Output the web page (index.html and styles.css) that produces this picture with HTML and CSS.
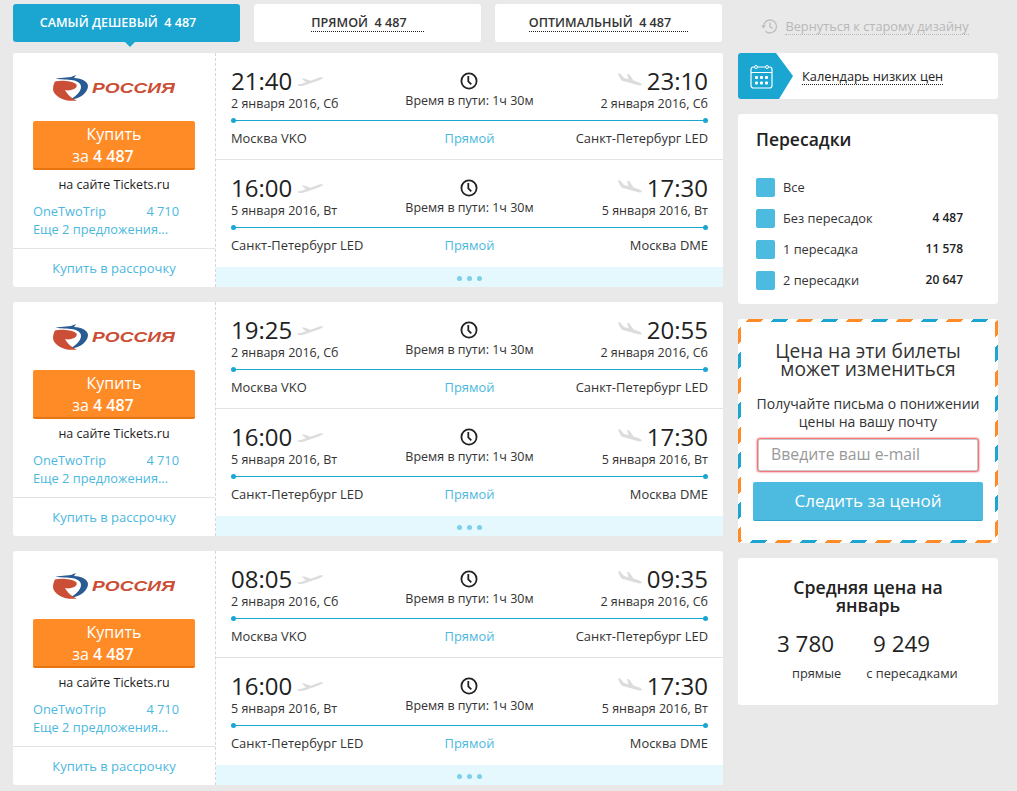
FILE: index.html
```html
<!DOCTYPE html>
<html lang="ru">
<head>
  <meta charset="UTF-8">
  <title>Авиабилеты</title>
  <link rel="stylesheet" href="styles.css">
</head>
<body>
  <svg class="sprite" width="0" height="0">
    <symbol id="logo-mark" viewBox="0 0 36 26">
      <path fill="#2a5a94" d="M2.500 3.500 18 2 23 0 21 3C29 3 35 7 35 11 35 17 28 24 16 25 22 22 28 17 28 12 28 8 24 5.500 18 5 12 4.500 5 4.500 2.500 3.500z"/>
      <path fill="#cb4f36" d="M2 6.500C8 5 19 6 23 9 25 11 23 14 18 15 16 15.500 14 15.500 12 15 14 19 19 24 24 25.500 20 26 16 26 12 25 5 23 0 18 0 14 0 11 1 8 2 6.500z"/>
    </symbol>
    <symbol id="plane-out" viewBox="0 0 26 12">
      <path fill="#dcdcdc" d="M0 9.500 4 9l5-1.800L4.500 3.500H7.200L13.500 5.700 20 3.400C23 2.400 26 2 26 2.800 26 3.800 23 5 20 6L7 10.600C4.500 11.400 1 11.200 0 9.500z"/>
    </symbol>
    <symbol id="plane-in" viewBox="0 0 24 16">
      <path fill="#dcdcdc" d="M0 .5 2 .2 6 5 10.500 6.200 9 .8 11.500 1.500 15.500 7.600 20 9C22 9.600 24 11 23.800 11.800 23.500 12.800 21 12.500 18.500 11.800L4 7.800C2 5.500.5 2.500 0 .5z"/>
    </symbol>
    <symbol id="clock" viewBox="0 0 18 18">
      <circle cx="9" cy="9" r="7.600" fill="none" stroke="#222" stroke-width="1.800"/>
      <path fill="none" stroke="#222" stroke-width="1.800" d="M8.300 4v5.300l3 3"/>
    </symbol>
  </svg>

  <div class="page">
    <main class="results">
      <nav class="tabs">
        <a class="tab tab-active" href="#"><span>САМЫЙ ДЕШЕВЫЙ&nbsp; 4 487</span></a>
        <a class="tab" href="#"><span class="dotted">ПРЯМОЙ&nbsp; 4 487</span></a>
        <a class="tab" href="#"><span class="dotted">ОПТИМАЛЬНЫЙ&nbsp; 4 487</span></a>
      </nav>

      <article class="ticket">
        <div class="buy">
          <div class="buy-main">
            <svg class="logo" width="122" height="26"><use href="#logo-mark" width="36" height="26"/><text class="logo-name" x="39" y="18" textLength="83" lengthAdjust="spacingAndGlyphs">РОССИЯ</text></svg>
            <a class="buy-btn" href="#">Купить<span class="buy-price">за <b>4 487</b></span></a>
            <p class="buy-site">на сайте Tickets.ru</p>
            <p class="offer"><span>OneTwoTrip</span><span>4 710</span></p>
            <p class="more">Еще 2 предложения...</p>
          </div>
          <a class="credit" href="#">Купить в рассрочку</a>
        </div>
        <div class="legs">
          <section class="leg">
            <div class="leg-top">
              <div class="point"><div class="time">21:40<svg class="plane" width="26" height="12"><use href="#plane-out"/></svg></div><div class="date">2 января 2016, Сб</div></div>
              <div class="duration"><svg width="18" height="18"><use href="#clock"/></svg><div>Время в пути: 1ч 30м</div></div>
              <div class="point point-end"><div class="time"><svg class="plane" width="24" height="16"><use href="#plane-in"/></svg>23:10</div><div class="date">2 января 2016, Сб</div></div>
            </div>
            <div class="route"></div>
            <div class="cities"><span>Москва VKO</span><a href="#">Прямой</a><span>Санкт-Петербург LED</span></div>
          </section>
          <section class="leg">
            <div class="leg-top">
              <div class="point"><div class="time">16:00<svg class="plane" width="26" height="12"><use href="#plane-out"/></svg></div><div class="date">5 января 2016, Вт</div></div>
              <div class="duration"><svg width="18" height="18"><use href="#clock"/></svg><div>Время в пути: 1ч 30м</div></div>
              <div class="point point-end"><div class="time"><svg class="plane" width="24" height="16"><use href="#plane-in"/></svg>17:30</div><div class="date">5 января 2016, Вт</div></div>
            </div>
            <div class="route"></div>
            <div class="cities"><span>Санкт-Петербург LED</span><a href="#">Прямой</a><span>Москва DME</span></div>
          </section>
          <div class="legs-more"><i></i><i></i><i></i></div>
        </div>
      </article>

      <article class="ticket">
        <div class="buy">
          <div class="buy-main">
            <svg class="logo" width="122" height="26"><use href="#logo-mark" width="36" height="26"/><text class="logo-name" x="39" y="18" textLength="83" lengthAdjust="spacingAndGlyphs">РОССИЯ</text></svg>
            <a class="buy-btn" href="#">Купить<span class="buy-price">за <b>4 487</b></span></a>
            <p class="buy-site">на сайте Tickets.ru</p>
            <p class="offer"><span>OneTwoTrip</span><span>4 710</span></p>
            <p class="more">Еще 2 предложения...</p>
          </div>
          <a class="credit" href="#">Купить в рассрочку</a>
        </div>
        <div class="legs">
          <section class="leg">
            <div class="leg-top">
              <div class="point"><div class="time">19:25<svg class="plane" width="26" height="12"><use href="#plane-out"/></svg></div><div class="date">2 января 2016, Сб</div></div>
              <div class="duration"><svg width="18" height="18"><use href="#clock"/></svg><div>Время в пути: 1ч 30м</div></div>
              <div class="point point-end"><div class="time"><svg class="plane" width="24" height="16"><use href="#plane-in"/></svg>20:55</div><div class="date">2 января 2016, Сб</div></div>
            </div>
            <div class="route"></div>
            <div class="cities"><span>Москва VKO</span><a href="#">Прямой</a><span>Санкт-Петербург LED</span></div>
          </section>
          <section class="leg">
            <div class="leg-top">
              <div class="point"><div class="time">16:00<svg class="plane" width="26" height="12"><use href="#plane-out"/></svg></div><div class="date">5 января 2016, Вт</div></div>
              <div class="duration"><svg width="18" height="18"><use href="#clock"/></svg><div>Время в пути: 1ч 30м</div></div>
              <div class="point point-end"><div class="time"><svg class="plane" width="24" height="16"><use href="#plane-in"/></svg>17:30</div><div class="date">5 января 2016, Вт</div></div>
            </div>
            <div class="route"></div>
            <div class="cities"><span>Санкт-Петербург LED</span><a href="#">Прямой</a><span>Москва DME</span></div>
          </section>
          <div class="legs-more"><i></i><i></i><i></i></div>
        </div>
      </article>

      <article class="ticket">
        <div class="buy">
          <div class="buy-main">
            <svg class="logo" width="122" height="26"><use href="#logo-mark" width="36" height="26"/><text class="logo-name" x="39" y="18" textLength="83" lengthAdjust="spacingAndGlyphs">РОССИЯ</text></svg>
            <a class="buy-btn" href="#">Купить<span class="buy-price">за <b>4 487</b></span></a>
            <p class="buy-site">на сайте Tickets.ru</p>
            <p class="offer"><span>OneTwoTrip</span><span>4 710</span></p>
            <p class="more">Еще 2 предложения...</p>
          </div>
          <a class="credit" href="#">Купить в рассрочку</a>
        </div>
        <div class="legs">
          <section class="leg">
            <div class="leg-top">
              <div class="point"><div class="time">08:05<svg class="plane" width="26" height="12"><use href="#plane-out"/></svg></div><div class="date">2 января 2016, Сб</div></div>
              <div class="duration"><svg width="18" height="18"><use href="#clock"/></svg><div>Время в пути: 1ч 30м</div></div>
              <div class="point point-end"><div class="time"><svg class="plane" width="24" height="16"><use href="#plane-in"/></svg>09:35</div><div class="date">2 января 2016, Сб</div></div>
            </div>
            <div class="route"></div>
            <div class="cities"><span>Москва VKO</span><a href="#">Прямой</a><span>Санкт-Петербург LED</span></div>
          </section>
          <section class="leg">
            <div class="leg-top">
              <div class="point"><div class="time">16:00<svg class="plane" width="26" height="12"><use href="#plane-out"/></svg></div><div class="date">5 января 2016, Вт</div></div>
              <div class="duration"><svg width="18" height="18"><use href="#clock"/></svg><div>Время в пути: 1ч 30м</div></div>
              <div class="point point-end"><div class="time"><svg class="plane" width="24" height="16"><use href="#plane-in"/></svg>17:30</div><div class="date">5 января 2016, Вт</div></div>
            </div>
            <div class="route"></div>
            <div class="cities"><span>Санкт-Петербург LED</span><a href="#">Прямой</a><span>Москва DME</span></div>
          </section>
          <div class="legs-more"><i></i><i></i><i></i></div>
        </div>
      </article>
    </main>

    <aside class="side">
      <a class="old-design" href="#">
        <svg width="17" height="17" viewBox="0 0 17 17"><path fill="none" stroke="#bdbdbd" stroke-width="1.300" d="M2.500 8.500a6.500 6.500 0 1 1 2 4.700M9 4.500v4.300l2.800 1.700"/><path fill="#bdbdbd" d="M0 7.500h5l-2.500 3z"/></svg>
        <span>Вернуться к старому дизайну</span>
      </a>

      <a class="calendar" href="#">
        <span class="calendar-icon">
          <svg width="23" height="25" viewBox="0 0 23 25"><rect x="1" y="3" width="21" height="21" rx="2.500" fill="none" stroke="#fff" stroke-width="1.200"/><path stroke="#fff" stroke-width="1.200" d="M1 8.500h21"/><circle cx="6" cy="3" r="1.500" fill="#1ba6d2" stroke="#fff"/><circle cx="17" cy="3" r="1.500" fill="#1ba6d2" stroke="#fff"/><g fill="#fff"><rect x="5" y="12" width="3" height="3" rx="1"/><rect x="10" y="12" width="3" height="3" rx="1"/><rect x="15" y="12" width="3" height="3" rx="1"/><rect x="5" y="17.500" width="3" height="3" rx="1"/><rect x="10" y="17.500" width="3" height="3" rx="1"/><rect x="15" y="17.500" width="3" height="3" rx="1"/></g></svg>
        </span>
        <span class="calendar-text">Календарь низких цен</span>
      </a>

      <section class="panel stops">
        <h3>Пересадки</h3>
        <label class="stop"><i></i><span>Все</span></label>
        <label class="stop"><i></i><span>Без пересадок</span><b>4 487</b></label>
        <label class="stop"><i></i><span>1 пересадка</span><b>11 578</b></label>
        <label class="stop"><i></i><span>2 пересадки</span><b>20 647</b></label>
      </section>

      <section class="envelope">
        <div class="envelope-in">
          <h4>Цена на эти билеты может измениться</h4>
          <p>Получайте письма о понижении цены на вашу почту</p>
          <input class="email" type="text" placeholder="Введите ваш e-mail">
          <button class="watch">Следить за ценой</button>
        </div>
      </section>

      <section class="panel average">
        <h3>Средняя цена на январь</h3>
        <div class="average-nums"><span>3 780</span><span>9 249</span></div>
        <div class="average-labels"><span>прямые</span><span>с пересадками</span></div>
      </section>
    </aside>
  </div>
</body>
</html>
```

FILE: styles.css
```css
* {
  margin: 0;
  padding: 0;
  box-sizing: border-box;
}

body {
  font-family: 'Open Sans', sans-serif;
  font-size: 12.500px;
  background-color: #e9e9e9;
  color: #222;
  overflow: hidden;
}

a {
  text-decoration: none;
  color: inherit;
}

.sprite {
  display: block;
  height: 0;
}

.page {
  display: flex;
  gap: 15px;
  padding: 4px 0 0 13px;
}

.results {
  width: 710px;
}

/* tabs */
.tabs {
  display: flex;
  gap: 14px;
  margin-bottom: 11px;
}

.tab {
  position: relative;
  flex: 0 0 227px;
  height: 38px;
  display: flex;
  align-items: center;
  justify-content: center;
  background-color: #fff;
  border-radius: 3px;
  font-size: 12.600px;
  font-weight: 600;
  color: #333;
}

.tab span {
  padding-right: 17px;
  line-height: 16px;
}

.tab-active {
  background-color: #1ba6d2;
  color: #fff;
}

.tab-active::after {
  content: '';
  position: absolute;
  left: 117px;
  bottom: -5px;
  margin-left: -5px;
  border-top: 5px solid #1ba6d2;
  border-left: 5px solid transparent;
  border-right: 5px solid transparent;
}

.tab .dotted {
  border-bottom: 1px dotted #222;
}

/* ticket */
.ticket {
  display: flex;
  height: 234px;
  margin-bottom: 15px;
  background-color: #fff;
  border-radius: 3px;
  overflow: hidden;
}

.buy {
  width: 203px;
  display: flex;
  flex-direction: column;
  border-right: 1px dashed #d5d5d5;
}

.buy-main {
  flex: 1;
  padding: 22px 20px 0;
}

.logo {
  display: block;
  margin: 0 auto 20px;
}

.logo-name {
  font-family: 'Liberation Sans', sans-serif;
  font-size: 15.500px;
  font-weight: 700;
  font-style: italic;
  fill: #cb4f36;
}

.buy-btn {
  display: block;
  height: 49px;
  padding-top: 2px;
  background-color: #ff8b26;
  border-bottom: 2px solid #e8740f;
  border-radius: 2px;
  text-align: center;
  font-size: 16px;
  line-height: 22px;
  color: #fff;
}

.buy-price {
  display: block;
  padding-right: 22px;
}

.buy-price b {
  font-weight: 600;
}

.buy-site {
  margin-top: 6px;
  text-align: center;
  line-height: 18px;
  color: #222;
}

.offer {
  display: flex;
  justify-content: space-between;
  margin-top: 8px;
  padding-right: 16px;
  font-size: 12.800px;
  line-height: 18px;
  color: #4cb8de;
}

.more {
  font-size: 12.800px;
  line-height: 18px;
  color: #4cb8de;
}

.credit {
  height: 39px;
  display: flex;
  align-items: center;
  justify-content: center;
  border-top: 1px solid #e3e3e3;
  font-size: 13px;
  color: #4cb8de;
}

.legs {
  flex: 1;
  display: flex;
  flex-direction: column;
}

.leg {
  height: 107px;
  padding: 12px 15px 0;
  border-bottom: 1px solid #e3e3e3;
}

.leg:nth-child(2) {
  border-bottom: 0;
}

.leg-top {
  display: grid;
  grid-template-columns: 1fr auto 1fr;
}

.time {
  display: flex;
  align-items: center;
  gap: 5px;
  font-size: 24px;
  line-height: 32px;
  color: #222;
}

.point-end {
  text-align: right;
}

.point-end .time {
  justify-content: flex-end;
}

.date {
  line-height: 14px;
  color: #333;
}

.duration {
  text-align: center;
  line-height: 16px;
  padding-top: 7px;
  color: #333;
}

.duration svg {
  display: block;
  margin: 0 auto 3px;
}

.route {
  position: relative;
  height: 1px;
  margin-top: 9px;
  background-color: #1ba6d2;
}

.route::before,
.route::after {
  content: '';
  position: absolute;
  top: -2px;
  width: 5px;
  height: 5px;
  border-radius: 50%;
  background-color: #1ba6d2;
}

.route::before {
  left: 0;
}

.route::after {
  right: 0;
}

.cities {
  display: grid;
  grid-template-columns: 1fr auto 1fr;
  margin-top: 8px;
  font-size: 12.900px;
  line-height: 18px;
  color: #333;
}

.cities a {
  color: #4cb8de;
}

.cities span:last-child {
  text-align: right;
}

.legs-more {
  flex: 1;
  display: flex;
  align-items: center;
  justify-content: center;
  gap: 5px;
  padding-top: 2px;
  background-color: #e4f8fe;
}

.legs-more i {
  width: 5px;
  height: 5px;
  border-radius: 50%;
  background-color: #7ecfe8;
}

/* sidebar */
.side {
  width: 260px;
}

.old-design {
  display: flex;
  align-items: center;
  justify-content: center;
  gap: 7px;
  height: 38px;
  margin-bottom: 11px;
  padding: 6px 6px 0 0;
  font-size: 12.800px;
  color: #b8b8b8;
}

.old-design span {
  border-bottom: 1px dotted #b8b8b8;
  line-height: 16px;
}

.calendar {
  display: flex;
  align-items: center;
  height: 46px;
  margin-bottom: 15px;
  background-color: #fff;
  border-radius: 3px;
  overflow: hidden;
}

.calendar-icon {
  width: 55px;
  height: 46px;
  display: flex;
  align-items: center;
  padding-left: 12px;
  background-color: #1ba6d2;
  clip-path: polygon(0 0, 38px 0, 55px 23px, 41px 46px, 0 46px);
}

.calendar-text {
  margin: 1px 0 0 9px;
  border-bottom: 1px dotted #222;
  font-size: 12.800px;
  line-height: 16px;
  color: #222;
}

.panel {
  background-color: #fff;
  border-radius: 3px;
}

.stops {
  height: 190px;
  margin-bottom: 15px;
  padding: 13px 35px 0 18px;
}

.stops h3 {
  font-size: 17.500px;
  font-weight: 600;
  line-height: 24px;
  margin-bottom: 27px;
}

.stop {
  display: flex;
  align-items: center;
  height: 19px;
  margin-bottom: 12px;
  font-size: 12.800px;
  color: #333;
}

.stop i {
  width: 19px;
  height: 19px;
  margin-right: 8px;
  border-radius: 2px;
  background-color: #4dbae0;
}

.stop span {
  flex: 1;
  margin-top: -2px;
}

.stop b {
  font-size: 12px;
  font-weight: 600;
  color: #222;
  margin-top: -2px;
}

.envelope {
  height: 224px;
  margin-bottom: 15px;
  padding: 3px;
  border-radius: 3px;
  background: repeating-linear-gradient(135deg, #fff 0, #fff 7.680px, #ff8b26 7.680px, #ff8b26 17.680px, #fff 17.680px, #fff 25.360px, #1ba6d2 25.360px, #1ba6d2 35.360px);
}

.envelope-in {
  height: 100%;
  padding: 20px 12px 0;
  background-color: #fff;
  text-align: center;
}

.envelope h4 {
  font-size: 19.200px;
  font-weight: 400;
  line-height: 18px;
  color: #333;
  padding: 0 20px;
  margin-bottom: 17px;
}

.envelope p {
  font-size: 14px;
  line-height: 18px;
  color: #333;
  margin-bottom: 8px;
}

.email {
  display: block;
  width: 220px;
  height: 32px;
  margin: 0 auto 11px;
  padding: 0 0 2px 12px;
  border: 1px solid #c9c9c9;
  border-radius: 2px;
  box-shadow: 0 0 2px 1px #f0474d;
  font-family: 'Open Sans', sans-serif;
  font-size: 15.800px;
  outline: none;
}

.email::placeholder {
  color: #999;
}

.watch {
  display: block;
  width: 230px;
  height: 39px;
  padding-bottom: 2px;
  border: 0;
  border-bottom: 1px solid #2ea5cd;
  border-radius: 2px;
  background-color: #4dbae0;
  font-family: 'Open Sans', sans-serif;
  font-size: 17px;
  color: #fff;
}

.average {
  height: 147px;
  padding-top: 20px;
  text-align: center;
}

.average h3 {
  font-size: 17.700px;
  font-weight: 600;
  line-height: 18px;
  padding: 0 40px;
}

.average-nums {
  display: flex;
  gap: 39px;
  padding-left: 39px;
  margin-top: 14px;
  font-size: 22.400px;
  line-height: 32px;
}

.average-labels {
  display: flex;
  gap: 25px;
  padding-left: 54px;
  margin-top: 4px;
  font-size: 12.800px;
  line-height: 18px;
  color: #333;
}
```
